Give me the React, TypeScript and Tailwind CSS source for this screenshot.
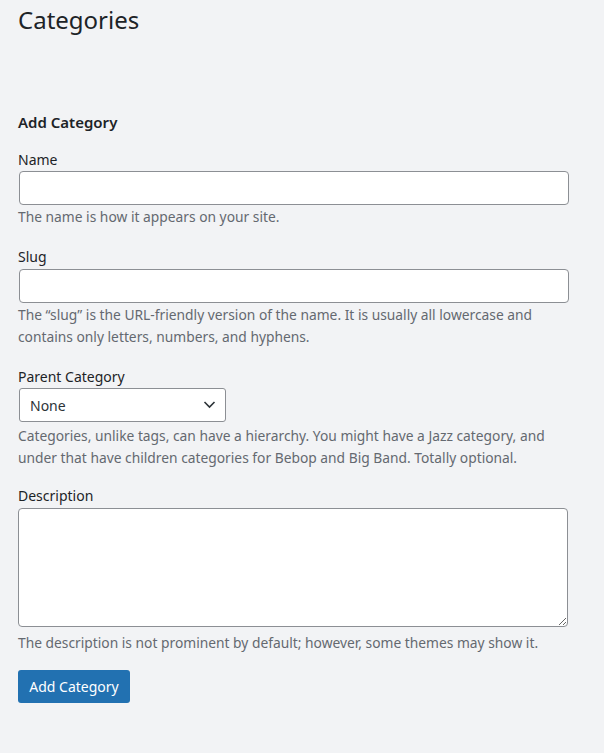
import React from 'react';

const Field: React.FC<{ label: string; className?: string; children: React.ReactNode }> = ({ label, className, children }) => (
  <div className={className}>
    <label className="block text-[14px] leading-[20px] text-[#1d2327]">{label}</label>
    {children}
  </div>
);

export default function App() {
  return (
    <div
      className="min-h-screen bg-[#f2f3f5] pl-[18px] pt-[5px] pb-10"
      style={{ fontFamily: '"Noto Sans", "Open Sans", sans-serif' }}
    >
      <h1 className="text-[24px] leading-[29px] font-normal text-[#1d2327]">Categories</h1>

      <div className="w-[551px] mt-[78px]">
        <h2 className="text-[15px] leading-[20px] font-semibold text-[#1d2327]">Add Category</h2>

        {/* Name */}
        <Field label="Name" className="mt-[18px]">
          <input
            type="text"
            className="mt-px ml-px block w-[550px] h-[34px] px-2 bg-white border border-[#8c8f94] rounded-[4px] outline-none"
          />
          <p className="mt-px text-[13.8px] leading-[22px] text-[#646970]">The name is how it appears on your site.</p>
        </Field>

        {/* Slug */}
        <Field label="Slug" className="mt-[19px]">
          <input
            type="text"
            className="mt-[2px] ml-px block w-[550px] h-[34px] px-2 bg-white border border-[#8c8f94] rounded-[4px] outline-none"
          />
          <p className="mt-px text-[13.8px] leading-[22px] text-[#646970]">
            The “slug” is the URL-friendly version of the name. It is usually all lowercase and contains only letters,
            numbers, and hyphens.
          </p>
        </Field>

        {/* Parent */}
        <Field label="Parent Category" className="mt-[19px]">
          <div className="relative mt-px ml-px w-[207px] h-[34px]">
            <select className="appearance-none block w-full h-full pl-[10px] pr-8 bg-white border border-[#8c8f94] rounded-[3px] text-[14px] text-[#2c3338] outline-none">
              <option>None</option>
            </select>
            <svg
              className="pointer-events-none absolute right-[10px] top-[12px]"
              width="13"
              height="9"
              viewBox="0 0 13 9"
              fill="none"
            >
              <path d="M1.5 2l5 5 5-5" stroke="#2c3338" strokeWidth="1.6" />
            </svg>
          </div>
          <p className="mt-[3px] text-[13.8px] leading-[22px] text-[#646970]">
            Categories, unlike tags, can have a hierarchy. You might have a Jazz category, and under that have children
            categories for Bebop and Big Band. Totally optional.
          </p>
        </Field>

        {/* Description */}
        <Field label="Description" className="mt-[17px]">
          <textarea
            rows={5}
            className="mt-[2px] block w-[550px] h-[119px] bg-white border border-[#8c8f94] rounded-[4px] outline-none"
          />
          <p className="mt-[5px] text-[13.8px] leading-[22px] text-[#646970]">
            The description is not prominent by default; however, some themes may show it.
          </p>
        </Field>

        <button className="mt-[16px] h-[33px] w-[112px] bg-[#2271b1] rounded-[3px] text-white text-[14px] leading-none">
          Add Category
        </button>
      </div>
    </div>
  );
}
